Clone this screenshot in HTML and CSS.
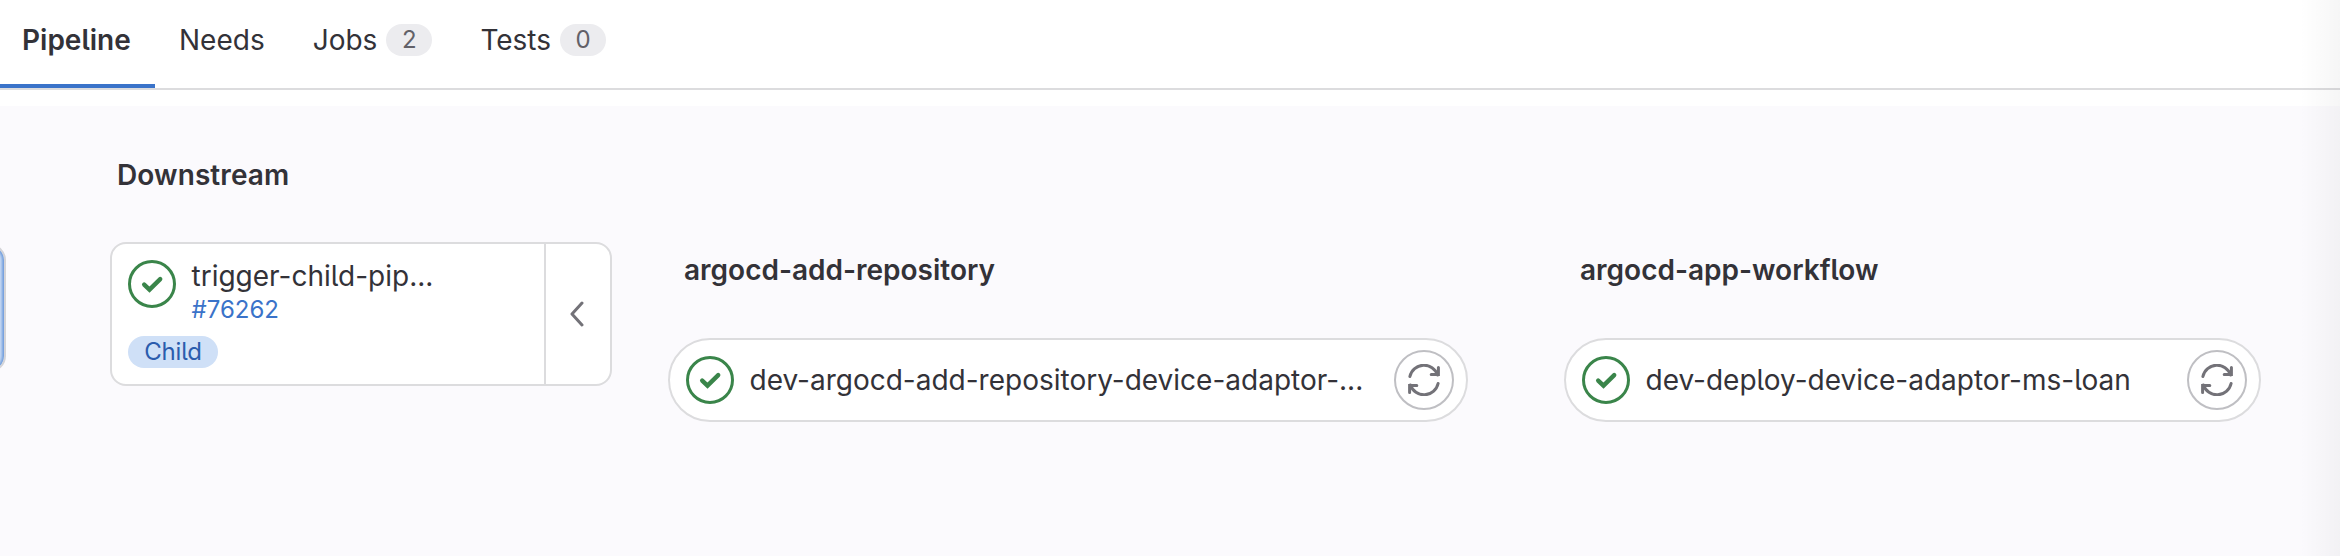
FILE: index.html
```html
<!DOCTYPE html>
<html lang="en">
<head>
<meta charset="utf-8">
<title>Pipeline</title>
<link rel="stylesheet" href="styles.css">
</head>
<body>
<svg class="defs" width="0" height="0" aria-hidden="true">
  <symbol id="status-success" viewBox="0 0 48 48">
    <circle cx="24" cy="24" r="22.5" fill="#fff" stroke="currentColor" stroke-width="3"/>
    <path d="M16.2 24.6 21.5 29.6 32.2 19.1" fill="none" stroke="currentColor" stroke-width="4.4" stroke-linecap="round" stroke-linejoin="miter"/>
  </symbol>
  <symbol id="retry" viewBox="0 0 32 32">
    <g fill="none" stroke="currentColor" stroke-width="3" stroke-linecap="round" stroke-linejoin="miter">
      <path d="M1.9 12.5A14.4 14.4 0 0 1 29.6 11"/>
      <path d="M30.4 3.5V10.5H23.2"/>
      <path d="M30.1 19.5A14.4 14.4 0 0 1 2.4 21"/>
      <path d="M1.6 28.5V21.5H8.8"/>
    </g>
  </symbol>
</svg>
<nav class="tabs">
  <a class="tab active">Pipeline</a>
  <a class="tab">Needs</a>
  <a class="tab">Jobs <span class="count">2</span></a>
  <a class="tab">Tests <span class="count">0</span></a>
</nav>
<main class="graph">
  <div class="upstream-edge"></div>
  <section class="downstream">
    <h2 class="title">Downstream</h2>
    <div class="card">
      <div class="card-body">
        <div class="card-head">
          <svg class="status"><use href="#status-success"/></svg>
          <div class="card-text">
            <span class="name">trigger-child-pip...</span>
            <a class="pipeline-id">#76262</a>
          </div>
        </div>
        <span class="badge">Child</span>
      </div>
      <div class="collapse">
        <svg class="chevron" viewBox="0 0 14 26"><path d="M12 2 2 13 12 24" fill="none" stroke="currentColor" stroke-width="3" stroke-linecap="round" stroke-linejoin="round"/></svg>
      </div>
    </div>
  </section>
  <section class="stage stage-repository">
    <h2 class="title">argocd-add-repository</h2>
    <div class="job">
      <svg class="status"><use href="#status-success"/></svg>
      <span class="name">dev-argocd-add-repository-device-adaptor-...</span>
      <span class="action"><svg class="retry"><use href="#retry"/></svg></span>
    </div>
  </section>
  <section class="stage stage-workflow">
    <h2 class="title">argocd-app-workflow</h2>
    <div class="job">
      <svg class="status"><use href="#status-success"/></svg>
      <span class="name">dev-deploy-device-adaptor-ms-loan</span>
      <span class="action"><svg class="retry"><use href="#retry"/></svg></span>
    </div>
  </section>
</main>
<div class="edge-shade"></div>
</body>
</html>
```
FILE: styles.css
```css
* { box-sizing: border-box; }
body {
  margin: 0;
  height: 556px;
  overflow: hidden;
  display: flex;
  flex-direction: column;
  background: #fff;
  color: #333238;
  font: 28px/32px Inter, sans-serif;
  font-feature-settings: "cv05";
}
.defs { position: absolute; }
.tabs {
  display: flex;
  height: 90px;
  border-bottom: 2px solid #dcdcde;
  margin-bottom: 16px;
  flex: none;
}
.tab {
  display: flex;
  align-items: center;
  gap: 9px;
  height: 88px;
  padding: 0 24px 8px;
}
.tab.active {
  width: 155px;
  padding: 0 0 4px 22px;
  font-weight: 600;
  border-bottom: 4px solid #3a73c9;
}
.count {
  width: 46px;
  height: 32px;
  text-align: center;
  border-radius: 16px;
  background: #ececef;
  color: #626168;
  font-size: 24px;
}
.graph {
  display: flex;
  flex: 1;
  align-items: flex-start;
  background: #fbfafd;
}
.upstream-edge {
  width: 36px;
  height: 128px;
  margin: 138px 0 0 -30px;
  border: 2px solid #d4d4d8;
  border-radius: 16px;
  background: #cbdcf4;
  box-shadow: inset 0 0 3px 2px #6c9adb;
}
.title {
  margin: 0;
  font-size: 28px;
  line-height: 32px;
  font-weight: 600;
  white-space: nowrap;
}
.name { white-space: nowrap; }
.status { width: 48px; height: 48px; flex: none; color: #3a854a; }
.downstream { margin: 53px 0 0 104px; width: 502px; }
.downstream .title { padding-left: 7px; margin-bottom: 51px; letter-spacing: .1px; }
.card {
  display: flex;
  height: 144px;
  border: 2px solid #dcdcde;
  border-radius: 16px;
  background: #fff;
}
.card-body { flex: 1; padding: 16px; }
.card-head { display: flex; gap: 15.5px; height: 76px; }
.card-text { display: flex; flex-direction: column; gap: 2px; }
.pipeline-id { font-size: 24px; color: #3a73c9; }
.badge {
  display: inline-block;
  width: 90px;
  height: 32px;
  text-align: center;
  border-radius: 16px;
  background: #cfe0f7;
  color: #2b5cad;
  font-size: 24px;
  letter-spacing: -.2px;
  vertical-align: top;
}
.collapse {
  display: flex;
  align-items: center;
  justify-content: center;
  width: 66px;
  padding-right: 2px;
  border-left: 2px solid #dcdcde;
  color: #737278;
}
.chevron { width: 14px; height: 26px; }
.stage .title { padding-left: 16px; margin-bottom: 52px; }
.stage { margin-top: 148px; }
.stage-repository { margin-left: 56px; width: 800px; }
.stage-workflow { margin-left: 96px; width: 697px; }
.job {
  display: flex;
  align-items: center;
  gap: 15.5px;
  height: 84px;
  padding: 0 12px 0 16px;
  border: 2px solid #dcdcde;
  border-radius: 42px;
  background: #fff;
}
.action {
  display: flex;
  align-items: center;
  justify-content: center;
  width: 60px;
  height: 60px;
  margin-left: auto;
  flex: none;
  border: 2px solid #bfbfc3;
  border-radius: 50%;
  color: #737278;
}
.retry { width: 32px; height: 32px; }
.edge-shade {
  position: absolute;
  top: 0;
  right: 0;
  width: 40px;
  height: 556px;
  background: linear-gradient(90deg, rgba(0,0,0,0), rgba(0,0,0,.035));
}
```
